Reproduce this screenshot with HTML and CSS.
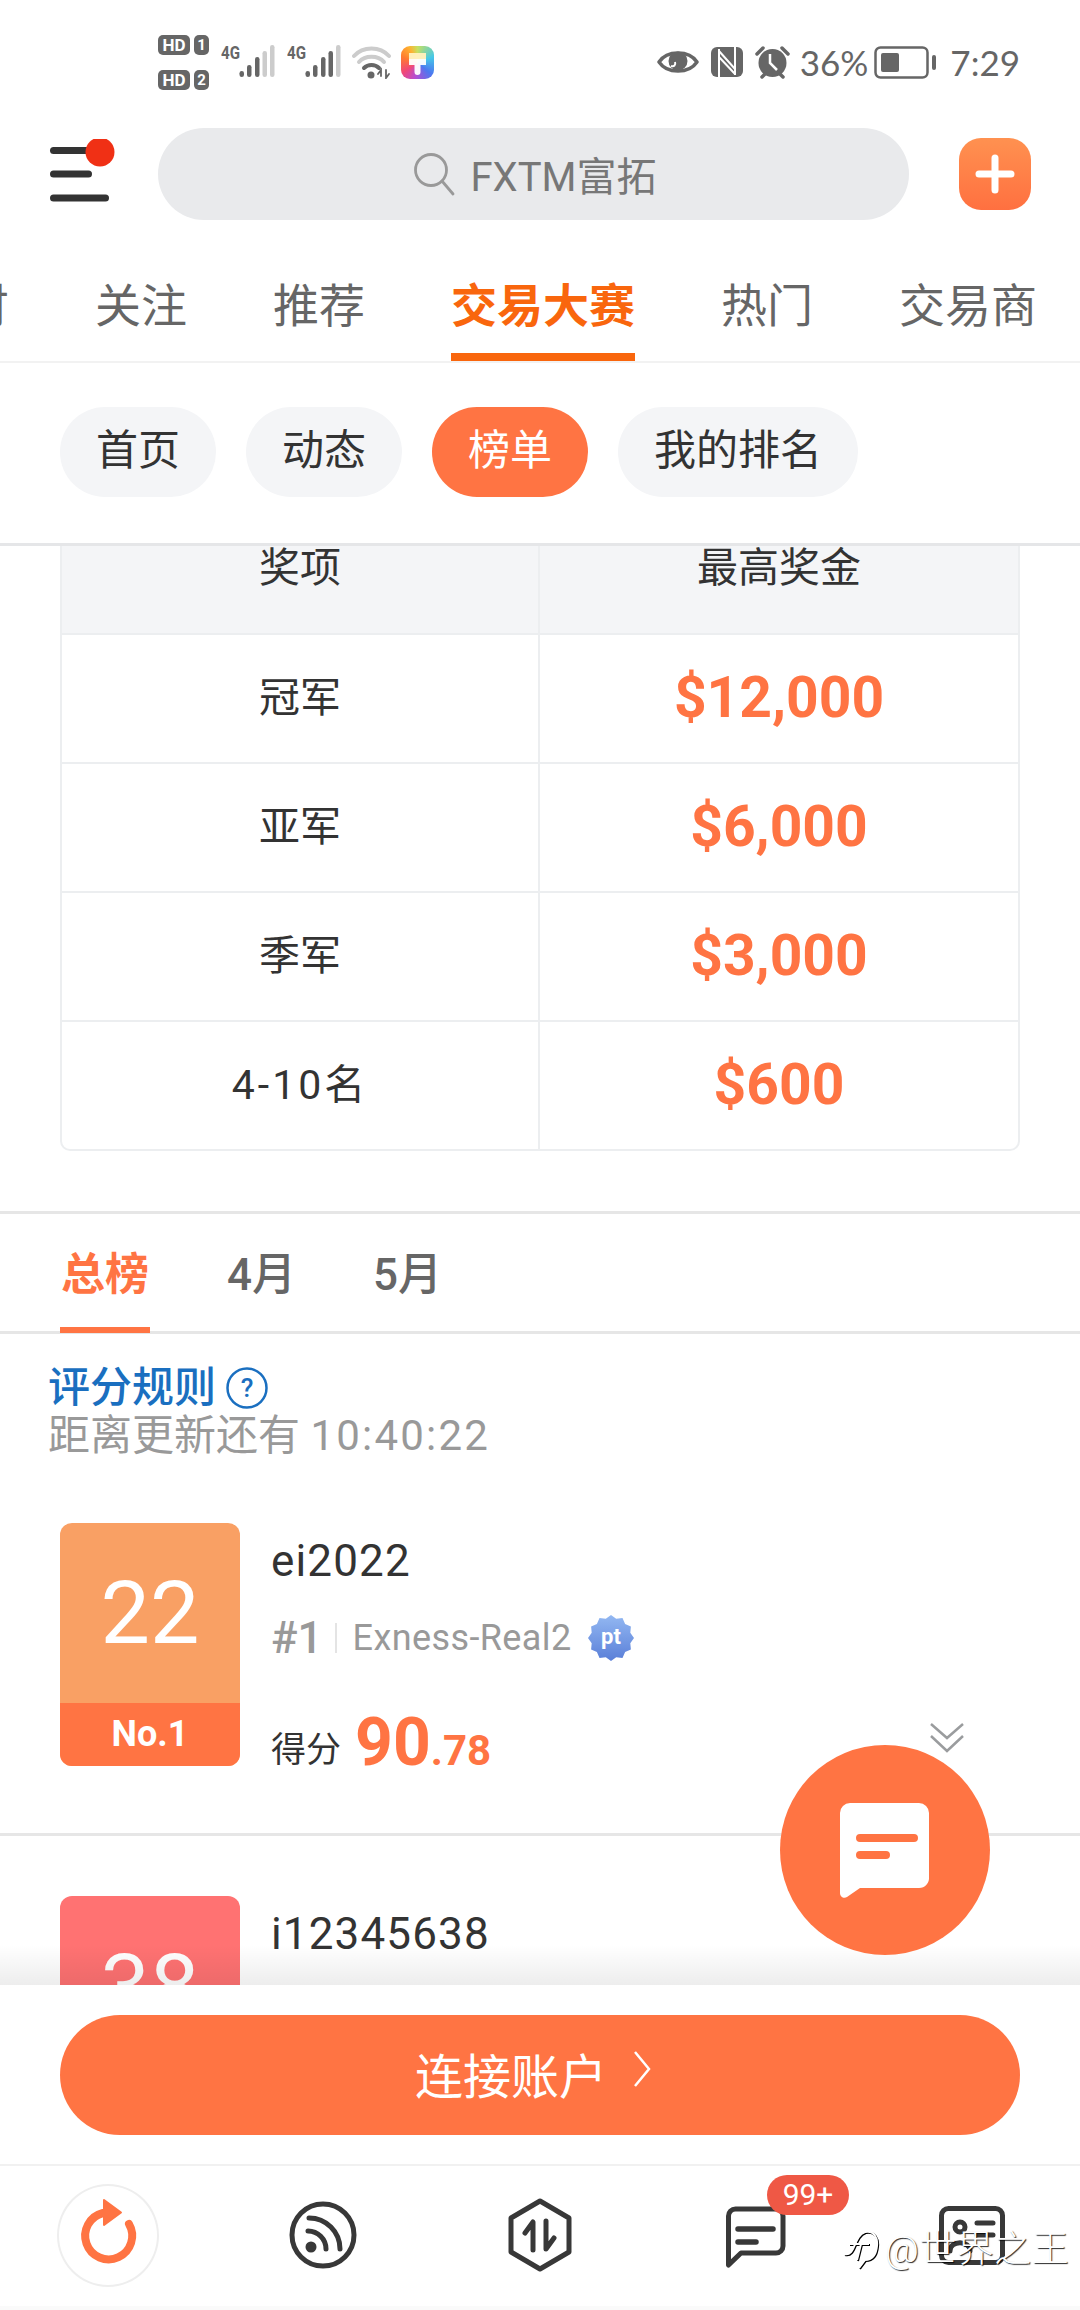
FILE: index.html
```html
<!DOCTYPE html>
<html lang="zh-CN">
<head>
<meta charset="utf-8">
<title>交易大赛</title>
<link rel="stylesheet" href="styles.css">
</head>
<body>
<div class="screen">

  <div class="status">
    <div class="status-left">
      <div class="hd-stack">
        <div class="hd-row"><span class="hd">HD</span><span class="sim">1</span></div>
        <div class="hd-row"><span class="hd">HD</span><span class="sim">2</span></div>
      </div>
      <svg class="signal" width="54" height="36" viewBox="0 0 54 36"><text x="0" y="15" class="net" textLength="19" lengthAdjust="spacingAndGlyphs">4G</text><rect x="18.500" y="27" width="4.500" height="6" rx="2.200" fill="#666"/><rect x="26" y="21" width="4.500" height="12" rx="2.200" fill="#666"/><rect x="34" y="13" width="4.500" height="20" rx="2.200" fill="#666"/><rect x="41.500" y="7" width="4.500" height="26" rx="2.200" fill="#ccc"/><rect x="49" y="1" width="4.500" height="32" rx="2.200" fill="#ccc"/></svg>
      <svg class="signal" width="54" height="36" viewBox="0 0 54 36"><text x="0" y="15" class="net" textLength="19" lengthAdjust="spacingAndGlyphs">4G</text><rect x="18.500" y="27" width="4.500" height="6" rx="2.200" fill="#666"/><rect x="26" y="21" width="4.500" height="12" rx="2.200" fill="#666"/><rect x="34" y="13" width="4.500" height="20" rx="2.200" fill="#666"/><rect x="41.500" y="7" width="4.500" height="26" rx="2.200" fill="#666"/><rect x="49" y="1" width="4.500" height="32" rx="2.200" fill="#ccc"/></svg>
      <svg class="wifi" width="40" height="34" viewBox="0 0 40 34" fill="none" stroke-linecap="round"><path d="M2 11C11 1 28 1 37 11" stroke="#ccc" stroke-width="4"/><path d="M7 17C13 10 26 10 32 17" stroke="#ccc" stroke-width="4"/><path d="M12 23C16 19 23 19 27 23" stroke="#666" stroke-width="4"/><circle cx="19" cy="30" r="3.500" fill="#666"/><path d="M29 31V25L26 29M34 25V33L37 29" stroke="#666" stroke-width="1.800"/></svg>
      <div class="app-icon"><svg width="33" height="33" viewBox="0 0 33 33"><path d="M8 7H25V19H19.500V26a3 3 0 0 1-6 0V19H8Z" fill="#fff" opacity=".95"/><rect x="8" y="7" width="17" height="6" fill="#ffe9a0" opacity=".7"/></svg></div>
    </div>
    <div class="status-right">
      <svg class="eye" width="42" height="30" viewBox="0 0 42 30" fill="none"><path d="M2 15C10 3 32 3 40 15C32 27 10 27 2 15Z" stroke="#666" stroke-width="3.500" stroke-linejoin="round"/><circle cx="21" cy="14" r="9.500" fill="#666"/><path d="M14 19C17 20 19 18 18 15" stroke="#fff" stroke-width="2"/></svg>
      <svg class="nfc" width="32" height="30" viewBox="0 0 32 30"><rect width="32" height="30" rx="6" fill="#666"/><path d="M8 30V2M24 0V28M8 4L24 22M8 10L24 27" fill="none" stroke="#fff" stroke-width="2"/></svg>
      <svg class="alarm" width="35" height="34" viewBox="0 0 35 34" fill="none"><circle cx="17.500" cy="18" r="14" fill="#666"/><path d="M2 9L8 3M33 9L27 3M7 32L10 29M28 32L25 29" stroke="#666" stroke-width="3.500" stroke-linecap="round"/><path d="M15 9V18L22 25" stroke="#fff" stroke-width="2.500"/></svg>
      <span class="battery-pct">36%</span>
      <svg class="battery" width="63" height="33" viewBox="0 0 63 33"><rect x="1.500" y="1.500" width="52" height="30" rx="5" fill="none" stroke="#666" stroke-width="2.500"/><rect x="7" y="7" width="18" height="19" rx="2" fill="#666"/><rect x="58" y="9" width="4" height="15" rx="2" fill="#666"/></svg>
      <span class="clock">7:29</span>
    </div>
  </div>

  <div class="topbar">
    <svg class="menu" width="70" height="70" viewBox="0 0 70 70"><rect x="3" y="8" width="44" height="7" rx="3.500" fill="#333"/><rect x="3" y="31.500" width="42" height="7" rx="3.500" fill="#333"/><rect x="3" y="55.500" width="59" height="7" rx="3.500" fill="#333"/><circle cx="53" cy="13" r="14.500" fill="#f03015"/></svg>
    <div class="search">
      <svg width="42" height="44" viewBox="0 0 42 44" fill="none" stroke="#999" stroke-width="2.800"><circle cx="18" cy="18" r="15.500"/><path d="M29 29L40 42" stroke-linecap="round"/></svg>
      <span>FXTM富拓</span>
    </div>
    <div class="add"><svg width="40" height="40" viewBox="0 0 40 40"><path d="M20 4V36M4 20H36" stroke="#fff" stroke-width="7" stroke-linecap="round"/></svg></div>
  </div>

  <nav class="tabs">
    <span class="tab tab-cut">财</span>
    <span class="tab">关注</span>
    <span class="tab">推荐</span>
    <span class="tab tab-on">交易大赛</span>
    <span class="tab">热门</span>
    <span class="tab">交易商</span>
  </nav>

  <div class="pills">
    <span class="pill">首页</span>
    <span class="pill">动态</span>
    <span class="pill pill-on">榜单</span>
    <span class="pill">我的排名</span>
  </div>

  <main class="scroll">
    <div class="prize">
      <div class="prize-row prize-head"><div class="cell">奖项</div><div class="cell">最高奖金</div></div>
      <div class="prize-row"><div class="cell">冠军</div><div class="cell money">$12,000</div></div>
      <div class="prize-row"><div class="cell">亚军</div><div class="cell money">$6,000</div></div>
      <div class="prize-row"><div class="cell">季军</div><div class="cell money">$3,000</div></div>
      <div class="prize-row"><div class="cell cell-range">4-10名</div><div class="cell money">$600</div></div>
    </div>

    <div class="subtabs">
      <span class="subtab subtab-on">总榜</span>
      <span class="subtab">4月</span>
      <span class="subtab">5月</span>
    </div>

    <div class="rules">
      <div class="rules-link">评分规则
        <svg width="42" height="42" viewBox="0 0 42 42" fill="none"><circle cx="21" cy="21" r="19.500" stroke="#1a6fc0" stroke-width="2.500"/><text x="21" y="30" class="qmark">?</text></svg>
      </div>
      <div class="rules-time">距离更新还有 <span class="digits">10:40:22</span></div>
    </div>

    <article class="card">
      <div class="avatar avatar-a"><div class="avatar-num">22</div><div class="avatar-rank">No.1</div></div>
      <div class="info">
        <div class="name">ei2022</div>
        <div class="meta">
          <span class="rank-no">#1</span><i class="sep"></i><span class="server">Exness-Real2</span>
          <svg class="pt" width="46" height="46" viewBox="0 0 46 46"><defs><linearGradient id="ptg" x1="0" y1="0" x2="0" y2="1"><stop offset="0" stop-color="#93b8f2"/><stop offset="1" stop-color="#5a7fd8"/></linearGradient></defs><polygon fill="url(#ptg)" points="46,23 42.300,28.200 42.900,34.500 37.100,37.100 34.500,42.900 28.200,42.300 23,46 17.800,42.300 11.500,42.900 8.900,37.100 3.100,34.500 3.700,28.200 0,23 3.700,17.800 3.100,11.500 8.900,8.900 11.500,3.100 17.800,3.700 23,0 28.200,3.700 34.500,3.100 37.100,8.900 42.900,11.500 42.300,17.800"/><text x="23" y="29" class="pt-text">pt</text></svg>
        </div>
        <div class="score"><span class="score-label">得分</span><span class="score-big">90</span><span class="score-small">.78</span></div>
      </div>
      <svg class="expand" width="36" height="32" viewBox="0 0 36 32" fill="none" stroke="#9a9c9e" stroke-width="2.500"><path d="M2 2L18 16L34 2M2 14L18 29L34 14"/></svg>
    </article>

    <article class="card card-next">
      <div class="avatar avatar-b"><div class="avatar-num">38</div></div>
      <div class="info"><div class="name">i12345638</div></div>
    </article>

    <div class="fade"></div>
  </main>

  <div class="action">
    <div class="connect">连接账户<svg width="18" height="36" viewBox="0 0 18 36" fill="none"><path d="M2 1L16 18L2 35" stroke="#fff" stroke-width="2.500"/></svg></div>
  </div>

  <footer class="nav">
    <div class="nav-item">
      <span class="nav-ring"></span>
      <svg width="102" height="102" viewBox="0 0 102 102" fill="none"><path d="M46 28A23.500 23.500 0 1 0 72 39" stroke="#ff7443" stroke-width="8" stroke-linecap="round"/><path d="M47 15L64 27.500L47 40Z" fill="#ff7443" stroke="#ff7443" stroke-width="2" stroke-linejoin="round"/></svg>
    </div>
    <div class="nav-item">
      <svg width="102" height="102" viewBox="0 0 102 102" fill="none" stroke="#383838" stroke-width="5" stroke-linecap="round"><circle cx="50" cy="50" r="31"/><path d="M35 46A18 18 0 0 1 53 64M36 33A31 31 0 0 1 67 64"/><circle cx="38" cy="62" r="5.500" fill="#383838" stroke="none"/></svg>
    </div>
    <div class="nav-item">
      <svg width="102" height="102" viewBox="0 0 102 102" fill="none" stroke="#383838" stroke-width="5" stroke-linecap="round" stroke-linejoin="round"><path d="M51 16L80 33V67L51 84L22 67V33Z"/><path d="M36 48L44 37V65M57 36V64L65 53"/></svg>
    </div>
    <div class="nav-item">
      <svg width="102" height="102" viewBox="0 0 102 102" fill="none" stroke="#383838" stroke-width="5" stroke-linecap="round" stroke-linejoin="round"><path d="M23.500 80V31A7 7 0 0 1 30.500 24H71A7 7 0 0 1 78 31V61A7 7 0 0 1 71 68H36Z"/><path d="M33 44H68M33 57H51" stroke-width="5.500"/></svg>
      <span class="badge">99+</span>
    </div>
    <div class="nav-item">
      <svg width="102" height="102" viewBox="0 0 102 102" fill="none" stroke="#383838" stroke-width="5" stroke-linecap="round"><rect x="20.500" y="23.500" width="61" height="54" rx="7"/><circle cx="39" cy="42" r="5"/><path d="M29 66C29 55 49 55 49 66"/><path d="M56 38H72M56 50H72"/></svg>
    </div>
  </footer>

  <div class="fab"><svg width="92" height="97" viewBox="0 0 92 97"><path d="M1 10A10 10 0 0 1 11 0H80A10 10 0 0 1 90 10V74A10 10 0 0 1 80 85H21L8 94C5 96 1 94 1 90Z" fill="#fff"/><path d="M21 35H75M21 52H47" stroke="#ff7443" stroke-width="8" stroke-linecap="round"/></svg></div>

  <div class="watermark">
    <svg class="wm-logo" width="36" height="40" viewBox="0 0 36 40" fill="none" stroke="#fff" stroke-width="2"><path d="M1 24C13 27 10 6 22 2C31 0 35 8 34 16C33 26 28 30 22 30L16 38" /><path d="M6 14H26M18 14L14 30"/></svg>
    <span>@世界之王</span>
  </div>
</div>
</body>
</html>
```

FILE: styles.css
```css
* { box-sizing: border-box; }
html, body { margin: 0; padding: 0; background: #fff; }
body { font-family: Roboto, "Noto Sans CJK SC", sans-serif; color: #333; }

.screen {
  position: relative;
  width: 1080px;
  height: 2310px;
  overflow: hidden;
  display: flex;
  flex-direction: column;
  background: #fff;
}

/* status bar */
.status {
  height: 124px;
  flex: none;
  padding: 0 60px 0 158px;
  display: flex;
  align-items: center;
  justify-content: space-between;
  color: #666;
}
.status-left, .status-right { display: flex; align-items: center; }
.hd-stack { display: flex; flex-direction: column; gap: 15px; width: 51px; }
.hd-row { display: flex; gap: 4px; }
.hd, .sim {
  height: 20px;
  background: #666;
  color: #fff;
  border-radius: 5px;
  font: 700 17px/20px Roboto, sans-serif;
  text-align: center;
}
.hd { width: 32px; }
.sim { width: 15px; font-size: 15px; }
.signal { margin-left: 12px; }
.net { font: 700 18px "Liberation Sans Narrow", Roboto, sans-serif; fill: #666; }
.wifi { margin-left: 11px; }
.app-icon {
  width: 33px;
  height: 33px;
  margin-left: 9px;
  border-radius: 9px;
  background: conic-gradient(from 0deg, #c6e060, #46c8e8 70deg, #4c78f0 130deg, #b84cd0 190deg, #f04878 235deg, #ff7a30 290deg, #ffb030 330deg, #c6e060);
}
.app-icon svg { display: block; }
.eye { margin-right: 12px; }
.nfc { margin-right: 12px; }
.alarm { margin-right: 10px; }
.battery-pct { font: 400 35px/40px Lato, sans-serif; margin-right: 6px; }
.battery { margin-right: 13px; }
.clock { font: 400 35px/40px Lato, sans-serif; }

/* top bar */
.topbar {
  height: 113px;
  flex: none;
  padding: 0 49px 13px 47px;
  display: flex;
  align-items: center;
}
.menu { flex: none; margin-right: 41px; }
.search {
  width: 751px;
  height: 92px;
  flex: none;
  padding-left: 2px;
  border-radius: 46px;
  background: #e9eaec;
  display: flex;
  align-items: center;
  justify-content: center;
  gap: 16px;
  font-size: 40px;
  color: #777;
}
.add {
  width: 72px;
  height: 72px;
  flex: none;
  margin-left: 50px;
  border-radius: 22px;
  background: linear-gradient(#ff9150, #ff7040);
  display: flex;
  align-items: center;
  justify-content: center;
}

/* channel tabs */
.tabs {
  height: 126px;
  flex: none;
  display: flex;
  gap: 86px;
  margin-left: -37px;
  width: 1117px;
  border-bottom: 2px solid #f2f2f2;
}
.tab {
  position: relative;
  flex: none;
  font-size: 46px;
  line-height: 60px;
  padding-top: 39px;
  color: #666;
  white-space: nowrap;
}
.tab-on { color: #f9660d; font-weight: 700; }
.tab-on::after {
  content: "";
  position: absolute;
  left: 0;
  right: 0;
  bottom: 0;
  height: 8px;
  background: #f9660d;
}

/* pills */
.pills {
  height: 183px;
  flex: none;
  padding: 44px 60px 0;
  display: flex;
  align-items: flex-start;
  gap: 30px;
  border-bottom: 3px solid #e5e6e8;
}
.pill {
  height: 90px;
  padding: 0 36px;
  border-radius: 45px;
  background: #f4f5f7;
  font-size: 42px;
  line-height: 88px;
  color: #333;
}
.pill-on { background: #ff7443; color: #fff; }

/* scrolling area */
.scroll { position: relative; flex: 1; min-height: 0; overflow: hidden; }

.prize {
  margin: 0 60px 60px;
  border: 2px solid #eceef0;
  border-top: 0;
  border-radius: 0 0 10px 10px;
}
.prize-row {
  display: grid;
  grid-template-columns: 476px 1fr;
  height: 129px;
  border-top: 2px solid #eceef0;
}
.prize-head {
  height: 87px;
  border-top: 0;
  background: #f4f5f7;
  line-height: 42px;
}
.cell {
  display: flex;
  align-items: center;
  justify-content: center;
  padding-bottom: 9px;
  font-size: 41px;
  color: #333;
}
.cell + .cell { border-left: 2px solid #eceef0; }
.prize-head .cell { align-items: flex-start; padding: 1px 0 0; }
.cell-range { letter-spacing: 3px; }
.money { padding-bottom: 3px; font-size: 57px; font-weight: 700; color: #ff7443; }

/* period tabs */
.subtabs {
  height: 123px;
  padding: 0 0 0 60px;
  display: flex;
  gap: 77px;
  border-top: 3px solid #e6e6e6;
  border-bottom: 3px solid #e6e6e6;
}
.subtab {
  position: relative;
  font-size: 44px;
  line-height: 60px;
  padding-top: 31px;
  font-weight: 500;
  color: #666;
}
.subtab-on { width: 90px; text-align: center; font-weight: 700; color: #ff7443; }
.subtab-on::after {
  content: "";
  position: absolute;
  left: 0;
  right: 0;
  bottom: -2px;
  height: 6px;
  background: #ff7443;
}

.rules { padding: 30px 0 0 48px; font-size: 42px; line-height: 48px; }
.rules-link { display: flex; align-items: center; gap: 10px; color: #1a6fc0; font-weight: 500; }
.qmark { font: 500 26px Roboto, sans-serif; fill: #1a6fc0; text-anchor: middle; }
.rules-time { color: #999; }
.digits { letter-spacing: 2.200px; font-weight: 400; }

/* ranking cards */
.card {
  display: flex;
  height: 376px;
  flex: none;
  padding: 63px 115px 67px 60px;
  border-bottom: 3px solid #e6e6e6;
}
.card-next { padding-top: 60px; border-bottom: 0; }
.avatar {
  width: 180px;
  height: 243px;
  flex: none;
  border-radius: 12px;
  overflow: hidden;
  color: #fff;
  display: flex;
  flex-direction: column;
}
.avatar-a { background: #f9a064; }
.avatar-b { background: #ff7272; }
.avatar-num {
  height: 180px;
  flex: none;
  text-align: center;
  font-size: 88px;
  line-height: 180px;
  font-weight: 400;
}
.avatar-rank {
  flex: 1;
  background: #ff7443;
  text-align: center;
  font-size: 36px;
  font-weight: 700;
  line-height: 62px;
}
.info { flex: 1; height: 243px; margin-left: 31px; padding-top: 8px; }
.name { font-size: 44px; line-height: 60px; color: #333; letter-spacing: 1.150px; }
.meta { display: flex; align-items: center; height: 50px; margin-top: 22px; color: #999; }
.rank-no { font-size: 44px; font-weight: 500; }
.sep { width: 2px; height: 30px; margin: 0 16px 0 12px; background: #e4e4e4; }
.server { font-size: 36px; letter-spacing: .4px; }
.pt { margin-left: 16px; }
.pt-text { font: 700 22px Roboto, sans-serif; fill: #fff; text-anchor: middle; }
.score { height: 70px; margin-top: 45px; line-height: 70px; white-space: nowrap; }
.score-label { font-size: 35px; color: #333; margin-right: 14px; vertical-align: 3px; }
.score-big { font-size: 66px; font-weight: 700; color: #ff7443; }
.score-small { font-size: 42px; font-weight: 700; color: #ff7443; }
.expand { flex: none; margin-top: 199px; }

.fade {
  position: absolute;
  left: 0;
  right: 0;
  bottom: 0;
  height: 40px;
  background: linear-gradient(rgba(0,0,0,0), rgba(0,0,0,.07));
}

/* connect button */
.action {
  height: 181px;
  flex: none;
  padding: 30px 60px 0;
  background: #fff;
  border-bottom: 2px solid #f1f1f1;
}
.connect {
  height: 120px;
  border-radius: 60px;
  background: #ff7443;
  color: #fff;
  font-size: 48px;
  display: flex;
  align-items: center;
  justify-content: center;
  gap: 26px;
  padding: 0 14px 4px 0;
}
.connect svg { margin-bottom: 8px; }

/* bottom navigation */
.nav {
  height: 144px;
  flex: none;
  display: grid;
  grid-template-columns: repeat(5, 216px);
  border-bottom: 4px solid #fafafa;
}
.nav-item {
  position: relative;
  display: flex;
  align-items: center;
  justify-content: center;
}
.nav-ring {
  position: absolute;
  left: 57px;
  top: 18px;
  width: 102px;
  height: 103px;
  border-radius: 50%;
  border: 2px solid #eee;
}
.badge {
  position: absolute;
  left: 119px;
  top: 9px;
  width: 82px;
  height: 40px;
  border-radius: 20px;
  background: #ef5845;
  color: #fff;
  font-size: 30px;
  line-height: 40px;
  text-align: center;
}

/* overlays */
.fab {
  position: absolute;
  left: 780px;
  top: 1745px;
  width: 210px;
  height: 210px;
  border-radius: 50%;
  background: #ff7443;
  display: flex;
  align-items: center;
  justify-content: center;
  padding: 2px 0 0;
}
.watermark {
  position: absolute;
  left: 843px;
  top: 2228px;
  display: flex;
  align-items: center;
  gap: 6px;
  color: #fff;
  font-size: 37px;
  line-height: 44px;
  letter-spacing: .5px;
  font-weight: 300;
  text-shadow: 1px 1px 1px rgba(0,0,0,.85);
}
.wm-logo { filter: drop-shadow(1px 1px 0 #000); }
```
